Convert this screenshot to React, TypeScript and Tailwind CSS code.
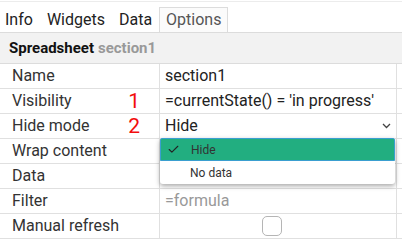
import { Check } from "lucide-react"

const tabs = ["Info", "Widgets", "Data", "Options"]

function Row({ label, num, children }: { label: string; num?: string; children?: React.ReactNode }) {
    return (
        <div className="grid grid-cols-[160px_237px] h-[25px] border-b border-[#e0e0e0]">
            <div className="flex items-center pl-[12px] pr-[19px] border-r border-[#e0e0e0] text-[16px] text-[#333]">
                <span>{label}</span>
                {num && <span className="ml-auto text-[21px] leading-none text-[#f20d0d]">{num}</span>}
            </div>
            <div className="relative flex items-center pl-[5px] border-r border-[#e0e0e0] text-[16px] text-[#222]">
                {children}
            </div>
        </div>
    )
}

export default function App() {
    return (
        <div className="w-[402px] h-[240px] bg-white overflow-hidden font-['Roboto',sans-serif]">
            <div className="h-[1px] mt-[1px] bg-[#ececec]" />
            <div className="flex items-end h-[31px] border-b border-[#dcdcdc] ml-[-2px]">
                {tabs.map((tab) => (
                    <div
                        key={tab}
                        className={`h-[25px] flex items-center px-[6px] border border-b-0 text-[16px] ${tab === "Options" ? "border-[#dcdcdc] text-[#555] bg-[#fbfbfb]" : "border-transparent text-[#222]"
                            }`}
                    >
                        {tab}
                    </div>
                ))}
            </div>
            <div className="h-[31px] flex items-center pl-[9px] bg-[#f2f2f2] border-b border-[#dcdcdc] text-[15px] font-bold">
                <span className="text-[#111]">Spreadsheet</span>
                <span className="ml-[4px] text-[#999]">section1</span>
            </div>
            <Row label="Name">section1</Row>
            <Row label="Visibility" num="1">=currentState() = 'in progress'</Row>
            <Row label="Hide mode" num="2">
                <span>Hide</span>
                <svg className="ml-auto mr-[5px]" width="9" height="6" viewBox="0 0 9 6">
                    <polyline points="1,1 4.5,4.5 8,1" fill="none" stroke="#444" strokeWidth="1.3" />
                </svg>
                <div className="absolute z-10 top-[24px] left-0 right-[1px] bg-white rounded-[3px] shadow-[0_2px_5px_rgba(0,0,0,0.35)] text-[12px] text-[#333]">
                    <div className="h-[23px] flex items-center bg-[#22ae80] border border-[#3a9fd0] rounded-t-[2px]">
                        <Check className="ml-[6px] w-[13px] h-[13px]" strokeWidth={2} color="#222" />
                        <span className="ml-[11px]">Hide</span>
                    </div>
                    <div className="h-[23px] flex items-center pl-[30px]">No data</div>
                </div>
            </Row>
            <Row label="Wrap content" />
            <Row label="Data" />
            <Row label="Filter">
                <span className="text-[#999]">=formula</span>
            </Row>
            <Row label="Manual refresh">
                <div className="ml-[97px] w-[20px] h-[20px] rounded-[5px] border border-[#b5b5b5]" />
            </Row>
        </div>
    )
}
